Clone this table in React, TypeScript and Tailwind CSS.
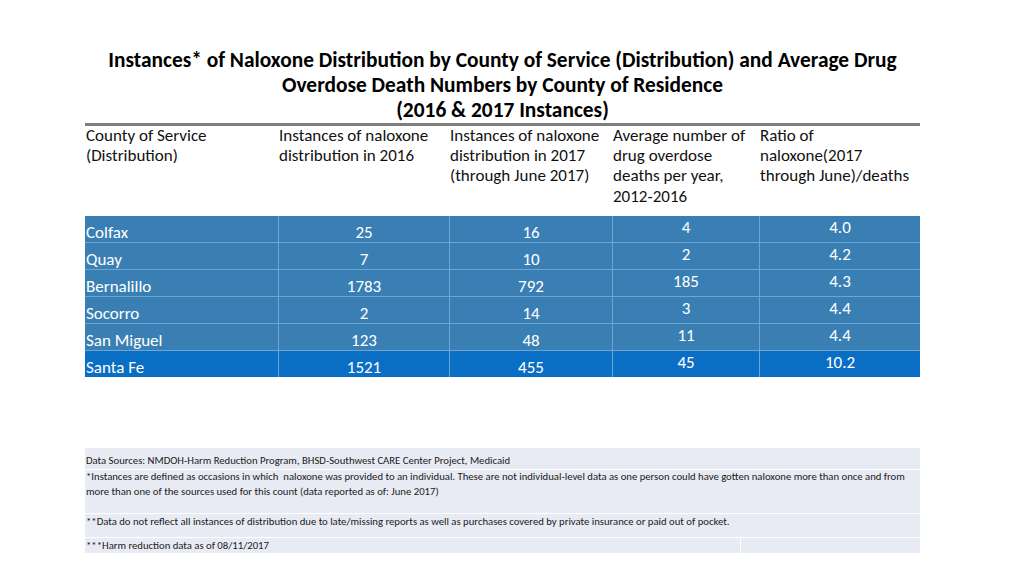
const font = { fontFamily: "Carlito, Calibri, 'Liberation Sans', sans-serif" };

const rows = [
  { county: "Colfax", y16: "25", y17: "16", deaths: "4", ratio: "4.0" },
  { county: "Quay", y16: "7", y17: "10", deaths: "2", ratio: "4.2" },
  { county: "Bernalillo", y16: "1783", y17: "792", deaths: "185", ratio: "4.3" },
  { county: "Socorro", y16: "2", y17: "14", deaths: "3", ratio: "4.4" },
  { county: "San Miguel", y16: "123", y17: "48", deaths: "11", ratio: "4.4" },
  { county: "Santa Fe", y16: "1521", y17: "455", deaths: "45", ratio: "10.2" },
];

const cols = "grid grid-cols-[193px_171px_163px_147px_161px]";

export default function App() {
  return (
    <div className="w-[1024px] h-[576px] bg-white text-black overflow-hidden" style={font}>
      <div className="ml-[85px] w-[835px] pt-[48px]">
        <h1 className="text-center font-bold text-[21.4px] leading-[25px] whitespace-nowrap">
          Instances* of Naloxone Distribution by County of Service (Distribution) and Average Drug
          <br />
          Overdose Death Numbers by County of Residence
          <br />
          (2016 &amp; 2017 Instances)
        </h1>
        <div className="h-[2.5px] bg-[#7f7f7f]" />

        <div className={`${cols} text-[17px] leading-[20.4px] h-[90.5px] text-[#111]`}>
          <div className="pl-[1px]">County of Service<br />(Distribution)</div>
          <div className="pl-[1px]">Instances of naloxone<br />distribution in 2016</div>
          <div className="pl-[1px]">Instances of naloxone<br />distribution in 2017<br />(through June 2017)</div>
          <div className="pl-[1px]">Average number of<br />drug overdose<br />deaths per year,<br />2012-2016</div>
          <div className="pl-[1px]">Ratio of<br />naloxone(2017<br />through June)/deaths</div>
        </div>

        <div className="text-white text-[17px] leading-[17px]">
          {rows.map((r, i) => {
            const last = i === rows.length - 1;
            return (
              <div
                key={r.county}
                className={`${cols} ${last ? "h-[26px] bg-[#0b6ec5]" : "h-[27px] bg-[#3a7fb3] border-b border-[#6ea6d2]"}`}
              >
                <div className="pl-[1px] pt-[8px]">{r.county}</div>
                <div className="border-l border-[#6ea6d2] text-center pt-[8px]">{r.y16}</div>
                <div className="border-l border-[#6ea6d2] text-center pt-[8px]">{r.y17}</div>
                <div className="border-l border-[#6ea6d2] text-center pt-[3px]">{r.deaths}</div>
                <div className="border-l border-[#6ea6d2] text-center pt-[3px]">{r.ratio}</div>
              </div>
            );
          })}
        </div>

        <div className="mt-[71px] text-[10.7px] leading-[14px] text-[#1a1a1a] flex flex-col gap-[1px]">
          <div className="bg-[#e8eaf4] h-[21px] pl-[1px] pt-[6px]">
            Data Sources: NMDOH-Harm Reduction Program, BHSD-Southwest CARE Center Project, Medicaid
          </div>
          <div className="bg-[#e8eaf4] h-[43px] pl-[1px] leading-[14.5px]">
            *Instances are defined as occasions in which&nbsp; naloxone was provided to an individual. These are not individual-level data as one person could have gotten naloxone more than once and from more than one of the sources used for this count (data reported as of: June 2017)
          </div>
          <div className="bg-[#e8eaf4] h-[23px] pl-[1px] pt-[1px]">
            **Data do not reflect all instances of distribution due to late/missing reports as well as purchases covered by private insurance or paid out of pocket.
          </div>
          <div className="grid grid-cols-[655px_1fr] h-[14px]">
            <div className="bg-[#e8eaf4] pl-[1px] pt-[1px] leading-[14px]">***Harm reduction data as of 08/11/2017</div>
            <div className="bg-[#e8eaf4] border-l border-white" />
          </div>
        </div>
      </div>
    </div>
  );
}
